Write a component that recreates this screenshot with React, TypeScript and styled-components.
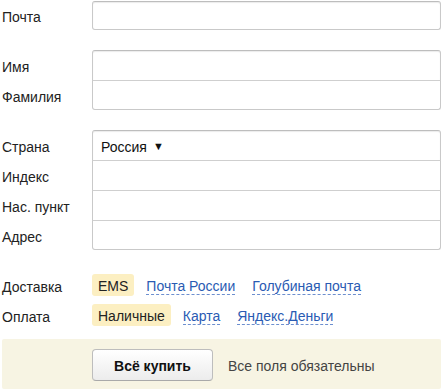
import React from "react";
import styled, { createGlobalStyle } from "styled-components";

const Global = createGlobalStyle`
  html, body { margin: 0; padding: 0; background: #fff; }
  body { font-family: "Liberation Sans", Arial, Helvetica, sans-serif; font-size: 14px; color: #222; }
`;

const Page = styled.div`
  width: 439px;
  margin-left: 2px;
  padding-top: 1px;
  display: flex;
  flex-direction: column;
`;

const Group = styled.div<{ $gap?: number }>`
  display: flex;
  flex-direction: column;
  margin-top: ${(p) => p.$gap ?? 0}px;
`;

const Row = styled.div`
  display: flex;
  align-items: stretch;
`;

const Label = styled.div`
  width: 90px;
  flex: none;
  display: flex;
  align-items: center;
  padding-top: 3px;
  box-sizing: border-box;
  color: #222;
`;

const Field = styled.div<{ $first?: boolean; $last?: boolean; $h?: number }>`
  flex: 1;
  height: ${(p) => p.$h ?? 30}px;
  box-sizing: border-box;
  border: 1px solid #c9c9c9;
  border-bottom: ${(p) => (p.$last ? "1px solid #c9c9c9" : "none")};
  border-top-color: ${(p) => (p.$first ? "#bdbdbd" : "#cfcfcf")};
  border-radius: ${(p) =>
    p.$first && p.$last ? "3px" : p.$first ? "3px 3px 0 0" : p.$last ? "0 0 3px 3px" : "0"};
  box-shadow: ${(p) => (p.$first ? "inset 0 1px 1px rgba(0,0,0,0.08)" : "none")};
  display: flex;
  align-items: center;
  padding: 2px 8px 0;
  background: #fff;
`;

const Select = styled.span`
  display: inline-flex;
  align-items: center;
  gap: 6px;
  color: #111;
`;

const Arrow = styled.span`
  font-size: 11px;
  line-height: 1;
`;

const OptionRow = styled.div<{ $gap: number }>`
  display: flex;
  align-items: center;
  height: 22px;
  margin-top: ${(p) => p.$gap}px;
`;

const Options = styled.div`
  display: flex;
  align-items: center;
  gap: 12px;
`;

const Chip = styled.span`
  display: inline-flex;
  align-items: center;
  height: 22px;
  padding: 1px 6px 0;
  box-sizing: border-box;
  background: #fcefc2;
  border-radius: 3px;
  color: #222;
`;

const Link = styled.span`
  color: #2a5bb3;
  border-bottom: 1px dashed #6d8fcf;
  line-height: 16px;
  padding-top: 2px;
  & + & {
    margin-left: 5px;
  }
`;

const Footer = styled.div`
  margin-top: 13px;
  height: 50px;
  background: #f7f4e3;
  border-radius: 2px;
  display: flex;
  align-items: center;
  padding-left: 90px;
  gap: 15px;
`;

const Button = styled.button`
  width: 121px;
  height: 32px;
  border: 1px solid #bdbdbd;
  border-bottom-color: #a9a9a9;
  border-radius: 4px;
  background: linear-gradient(#ffffff, #ececec);
  font-family: "Liberation Sans", Arial, sans-serif;
  font-size: 14px;
  font-weight: bold;
  color: #111;
  padding: 1px 0 0;
  margin-top: 2px;
`;

const Note = styled.span`
  color: #444;
  margin-top: 3px;
`;

export default function App() {
  return (
    <>
      <Global />
      <Page>
        <Group>
          <Row>
            <Label>Почта</Label>
            <Field $first $last $h={29} />
          </Row>
        </Group>
        <Group $gap={20}>
          <Row>
            <Label>Имя</Label>
            <Field $first />
          </Row>
          <Row>
            <Label>Фамилия</Label>
            <Field $last />
          </Row>
        </Group>
        <Group $gap={20}>
          <Row>
            <Label>Страна</Label>
            <Field $first>
              <Select>
                Россия <Arrow>▼</Arrow>
              </Select>
            </Field>
          </Row>
          <Row>
            <Label>Индекс</Label>
            <Field />
          </Row>
          <Row>
            <Label>Нас. пункт</Label>
            <Field />
          </Row>
          <Row>
            <Label>Адрес</Label>
            <Field $last />
          </Row>
        </Group>
        <OptionRow $gap={24}>
          <Label>Доставка</Label>
          <Options>
            <Chip>EMS</Chip>
            <Link>Почта России</Link>
            <Link>Голубиная почта</Link>
          </Options>
        </OptionRow>
        <OptionRow $gap={8}>
          <Label>Оплата</Label>
          <Options>
            <Chip>Наличные</Chip>
            <Link>Карта</Link>
            <Link>Яндекс.Деньги</Link>
          </Options>
        </OptionRow>
        <Footer>
          <Button>Всё купить</Button>
          <Note>Все поля обязательны</Note>
        </Footer>
      </Page>
    </>
  );
}
